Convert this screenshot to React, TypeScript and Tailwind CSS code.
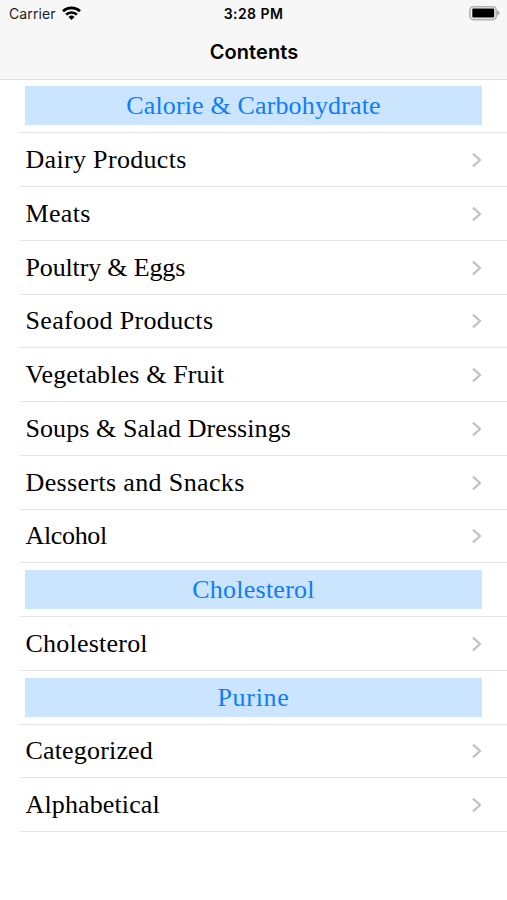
type Item = { label: string; tracking: string; section?: boolean };

const items: Item[] = [
  { label: "Calorie & Carbohydrate", tracking: "tracking-[0.15px]", section: true },
  { label: "Dairy Products", tracking: "tracking-[0.32px]" },
  { label: "Meats", tracking: "tracking-[0.35px]" },
  { label: "Poultry & Eggs", tracking: "tracking-[-0.15px]" },
  { label: "Seafood Products", tracking: "tracking-[0.32px]" },
  { label: "Vegetables & Fruit", tracking: "tracking-[0.14px]" },
  { label: "Soups & Salad Dressings", tracking: "tracking-[0.08px]" },
  { label: "Desserts and Snacks", tracking: "tracking-[0.36px]" },
  { label: "Alcohol", tracking: "tracking-[-0.35px]" },
  { label: "Cholesterol", tracking: "tracking-[0.24px]", section: true },
  { label: "Cholesterol", tracking: "tracking-[0.22px]" },
  { label: "Purine", tracking: "tracking-[0.7px]", section: true },
  { label: "Categorized", tracking: "tracking-[0.17px]" },
  { label: "Alphabetical", tracking: "tracking-[0.13px]" },
];

function Wifi() {
  return (
    <svg width="19" height="15" viewBox="0 0 19 15" fill="none" stroke="#000" strokeWidth="2.6">
      <path d="M1 5.2C5.6 .7 13.4 .7 18 5.2" />
      <path d="M4.1 8.6C7 5.7 12 5.7 14.9 8.6" />
      <path d="M6.5 11a4.3 4.3 0 0 1 6 0l-3 3z" fill="#000" stroke="none" />
    </svg>
  );
}

function Battery() {
  return (
    <svg width="31" height="15" viewBox="0 0 31 15">
      <rect x="0.9" y="0.8" width="26.4" height="12.8" rx="3.6" fill="#f7f7f7" stroke="#b2b2b2" strokeWidth="1.6" />
      <rect x="3.3" y="2.6" width="21.9" height="9" rx="1" fill="#000" />
      <path d="M28.2 4.6c3.2 1.2 3.2 3.8 0 5z" fill="#a8a8a8" />
    </svg>
  );
}

function Chevron() {
  return (
    <svg width="11" height="16" viewBox="0 0 11 16" fill="none" stroke="#c2c2c5" strokeWidth="2.2">
      <path d="M2 1.6L9 8l-7 6.4" />
    </svg>
  );
}

export default function App() {
  return (
    <div className="h-[900px] w-[507px] overflow-hidden bg-white text-black">
      <header className="h-[79.5px] border-b border-[#dedede] bg-[#f7f7f7] font-['Inter',sans-serif]">
        <div className="grid h-[27px] grid-cols-3 items-center pl-[9px] pr-[7px] text-[14px]">
          <div className="flex items-center gap-[6px] text-[#202020]">
            <span className="tracking-[0.1px]">Carrier</span>
            <Wifi />
          </div>
          <div className="pr-[2px] text-center text-[14px] font-semibold tracking-[0.45px]">3:28 PM</div>
          <div className="flex justify-end">
            <Battery />
          </div>
        </div>
        <h1 className="flex h-[50px] items-center justify-center pl-px text-[20px] font-semibold tracking-[0.05px]">
          Contents
        </h1>
      </header>
      <ul className="pl-5 font-['Liberation_Serif',serif] text-[26px] leading-[38px]">
        {items.map((item, i) => (
          <li key={i} className="flex h-[53.75px] items-center border-b border-[#e4e4e6] pl-[5px] pr-[25px]">
            {item.section ? (
              <h2 className="h-[39px] w-full bg-[#cbe4ff] pt-px text-center text-[#0d7dfa]">
                <span className={item.tracking}>{item.label}</span>
              </h2>
            ) : (
              <div className="flex w-full items-center justify-between pl-[0.5px] pt-px">
                <span className={item.tracking}>{item.label}</span>
                <Chevron />
              </div>
            )}
          </li>
        ))}
      </ul>
    </div>
  );
}
